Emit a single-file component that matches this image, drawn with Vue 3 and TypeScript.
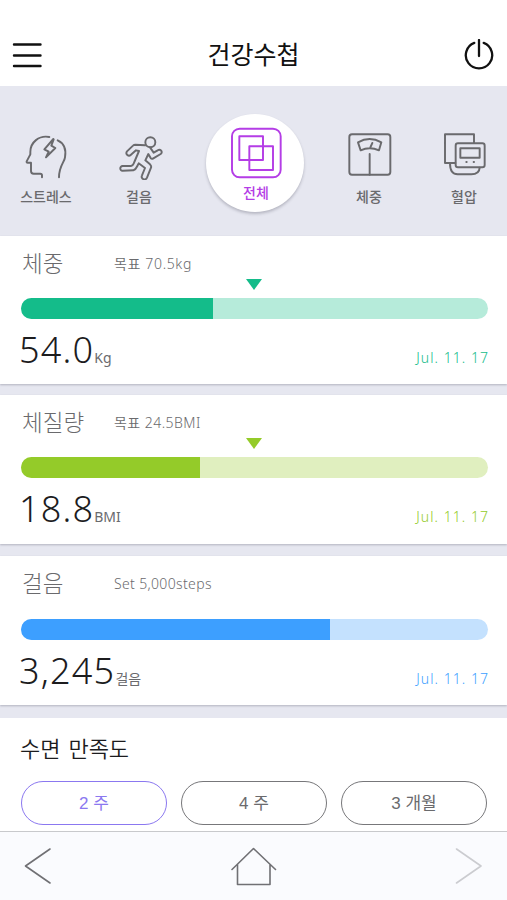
<script setup lang="ts">
import { ref } from 'vue'

interface Metric {
  id: string
  title: string
  goal: string
  value: string
  unit: string
  date: string
  percent: number
  marker: boolean
}

const metrics: Metric[] = [
  { id: 'weight', title: '체중', goal: '목표 70.5kg', value: '54.0', unit: 'Kg', date: 'Jul. 11. 17', percent: 41.1, marker: true },
  { id: 'bmi', title: '체질량', goal: '목표 24.5BMI', value: '18.8', unit: 'BMI', date: 'Jul. 11. 17', percent: 38.4, marker: true },
  { id: 'steps', title: '걸음', goal: 'Set 5,000steps', value: '3,245', unit: '걸음', date: 'Jul. 11. 17', percent: 66.1, marker: false },
]

const periods: string[] = ['2 주', '4 주', '3 개월']
const selected = ref<string>('2 주')
</script>

<template>
  <div class="app">
    <header class="header">
      <svg class="menu" width="30" height="28" viewBox="0 0 30 28">
        <path d="M2 3.5h26.5M2 14.5h26.5M2 25h26.5" />
      </svg>
      <h1>건강수첩</h1>
      <svg class="power" width="32" height="32" viewBox="0 0 32 32">
        <path d="M11.3 3.9A13.2 13.2 0 1 0 20.7 3.9M16 1v16" />
      </svg>
    </header>

    <nav class="tabs">
      <a class="tab">
        <svg width="48" height="48" viewBox="66 66 144 144">
          <path d="M148 81C117 75 91 97 91 126V133L80 154Q79 158 83 158H93V183Q93 191 101 191H121Q126 191 126 196V202M173 91C191 99 199 118 195 142C194 155 177 168 177 202M160 87L133 118L146 125L138 142L166 114L154 107L161 88Z" />
        </svg>
        <span>스트레스</span>
      </a>
      <a class="tab">
        <svg width="48" height="48" viewBox="345 66 144 144">
          <circle cx="451" cy="97" r="15" />
          <path d="M435 106L406 104Q402 104 399 107L381 124C375 133 386 141 392 135L408 121L417 123L403 156Q399 168 393 168H368C358 168 359 183 368 182L400 181Q407 179 412 168L416 160L435 174L426 196C421 207 436 213 441 203L453 173Q455 168 450 163L436 151L445 132L452 144Q455 148 460 145L482 132C490 126 481 115 473 121L461 128L450 112M452 144L446 134" />
        </svg>
        <span>걸음</span>
      </a>
      <a class="tab active">
        <svg width="52" height="52" viewBox="150 66 156 156">
          <rect x="156" y="71" width="146" height="146" rx="23" />
          <path d="M178 94H249V165H178ZM208 124H279V195H208Z" />
        </svg>
        <span>전체</span>
      </a>
      <a class="tab">
        <svg width="48" height="48" viewBox="45 66 144 144">
          <rect x="58" y="73" width="123" height="121" rx="8" />
          <path d="M119 132V194M84 97Q119 77 154 97L147 121Q119 108 92 121ZM121 112L127 99" />
        </svg>
        <span>체중</span>
      </a>
      <a class="tab">
        <svg width="48" height="48" viewBox="330 66 144 144">
          <path d="M376 159H345V73H432V98M360 160C360 180 368 193 383 193H424Q448 193 449 173" />
          <rect x="377" y="100" width="87" height="72" rx="7" />
          <rect x="391" y="115" width="58" height="28" />
          <path class="dots" d="M409 156h1M431 156h1" />
        </svg>
        <span>혈압</span>
      </a>
    </nav>

    <main>
      <section v-for="m in metrics" :key="m.id" class="card" :class="m.id">
        <div class="card-head">
          <h2>{{ m.title }}</h2>
          <p>{{ m.goal }}</p>
        </div>
        <div class="marker">
          <svg v-if="m.marker" width="16" height="11" viewBox="0 0 16 11"><path d="M0 0H16L8 11Z" /></svg>
        </div>
        <div class="bar"><div class="fill" :style="{ width: m.percent + '%' }"></div></div>
        <div class="card-foot">
          <div class="reading"><strong>{{ m.value }}</strong><span>{{ m.unit }}</span></div>
          <time>{{ m.date }}</time>
        </div>
      </section>

      <section class="sleep">
        <h2>수면 만족도</h2>
        <div class="periods">
          <button
            v-for="p in periods"
            :key="p"
            type="button"
            :class="{ on: p === selected }"
            @click="selected = p"
          >{{ p }}</button>
        </div>
      </section>
    </main>

    <footer class="toolbar">
      <svg width="28" height="38" viewBox="0 0 28 38"><path d="M26 2L1.5 19L26 36" /></svg>
      <svg width="46" height="40" viewBox="0 0 46 40"><path d="M1 22.5L22.5 1.5L44.5 22.5M6.5 17.5V37.5H39V17.5" /></svg>
      <svg class="off" width="28" height="38" viewBox="0 0 28 38"><path d="M1.5 2L26 19L1.5 36" /></svg>
    </footer>
  </div>
</template>

<style>
body {
  margin: 0;
  background: #fff;
}
</style>

<style scoped>
.app {
  display: flex;
  flex-direction: column;
  width: 507px;
  height: 900px;
  overflow: hidden;
  background: #e6e7f0;
  color: #6a6a6d;
  font-family: "Noto Sans", "Noto Sans CJK KR", sans-serif;
}
h1, h2, p {
  margin: 0;
}
svg {
  display: block;
  fill: none;
  stroke: currentColor;
  stroke-linecap: round;
  stroke-linejoin: round;
}
.header {
  display: flex;
  flex: none;
  justify-content: space-between;
  align-items: center;
  box-sizing: border-box;
  height: 86px;
  padding: 23px 12px 0 12px;
  background: #fff;
  color: #111;
}
.header h1 {
  font: 400 25px/36px "Noto Sans CJK KR", sans-serif;
  padding: 0 0 4px 2px;
}
.menu {
  stroke-width: 2.4;
}
.power {
  stroke-width: 2.3;
}
.tabs {
  display: grid;
  flex: none;
  grid-template-columns: 92px 94px 138px 90px 100px;
  height: 150px;
  overflow: hidden;
}
.tab {
  display: flex;
  flex-direction: column;
  align-items: center;
  padding-top: 46px;
}
.tab svg {
  stroke-width: 5.8;
}
.tab span {
  margin-top: 6px;
  font: 500 14px/20px "Noto Sans CJK KR", sans-serif;
  white-space: nowrap;
}
.tab .dots {
  stroke-width: 6;
}
.tab.active {
  justify-self: center;
  box-sizing: border-box;
  width: 98px;
  height: 98px;
  margin-top: 28px;
  padding: 13px 0 0 2px;
  border-radius: 50%;
  background: #fff;
  box-shadow: 0 2px 3px rgba(60, 60, 80, 0.28);
  color: #b43de6;
}
.tab.active span {
  margin-top: 3px;
}
.card {
  box-sizing: border-box;
  height: 148px;
  margin-bottom: 11px;
  padding: 10px 19px 0 21px;
  background: #fff;
  box-shadow: 0 1px 2px rgba(60, 60, 80, 0.3);
}
.card.bmi {
  height: 149px;
  margin-bottom: 12px;
}
.card.steps {
  height: 149px;
  margin-bottom: 13px;
}
.card-head {
  display: grid;
  grid-template-columns: 92px 1fr;
  height: 33px;
  padding-left: 1px;
}
.card-head h2 {
  font: 300 22.5px/32px "Noto Sans CJK KR", sans-serif;
  white-space: nowrap;
}
.card-head p {
  font-size: 14px;
  font-weight: 350;
  line-height: 35px;
  letter-spacing: 0.45px;
}
.weight .card-head p {
  letter-spacing: 0.65px;
}
.steps .card-head p {
  letter-spacing: 0.35px;
}
.marker {
  display: flex;
  justify-content: center;
  height: 19px;
  padding-right: 1px;
  color: var(--main);
}
.marker svg {
  fill: currentColor;
  stroke: none;
}
.bar {
  height: 21px;
  overflow: hidden;
  border-radius: 11px;
  background: var(--soft);
}
.fill {
  height: 100%;
  background: var(--main);
}
.steps .marker {
  height: 20px;
}
.card-foot {
  display: flex;
  justify-content: space-between;
  align-items: baseline;
  margin-left: -2px;
}
.reading {
  line-height: 61px;
}
.reading strong {
  color: #1c1c1e;
  font-size: 36px;
  font-weight: 300;
  letter-spacing: 1.2px;
}
.reading span {
  font-size: 14px;
  font-weight: 400;
}
time {
  margin-right: -1px;
  color: var(--main);
  font-size: 14px;
  font-weight: 350;
  letter-spacing: 1.05px;
}
.weight {
  --main: #14bc8a;
  --soft: #b6ebda;
}
.bmi {
  --main: #94cb29;
  --soft: #e0efbf;
}
.steps {
  --main: #3d9fff;
  --soft: #c4e1fe;
}
.sleep {
  height: 113px;
  padding: 13px 20px 0 20px;
  box-sizing: border-box;
  background: #fff;
}
.sleep h2 {
  color: #1c1c1e;
  font: 350 22px/32px "Noto Sans CJK KR", sans-serif;
  word-spacing: 3px;
}
.periods {
  display: grid;
  grid-template-columns: repeat(3, 1fr);
  gap: 14px;
  margin: 18px 0 0 1px;
}
.periods button {
  height: 44px;
  padding: 2px 0 0;
  border: 1.5px solid #77777a;
  border-radius: 22px;
  background: #fff;
  color: #6a6a6d;
  font: 400 17px/38px "Liberation Sans", "Noto Sans CJK KR", sans-serif;
}
.periods button.on {
  border-color: #8b78f0;
  color: #8b78f0;
}
.toolbar {
  display: flex;
  flex: none;
  justify-content: space-between;
  box-sizing: border-box;
  height: 69px;
  padding: 15px 24px 0;
  border-top: 1px solid #c8c9cc;
  background: #fafbfe;
  color: #707074;
}
.toolbar svg {
  stroke-width: 1.6;
}
.toolbar .off {
  color: #cbccd0;
}
</style>
